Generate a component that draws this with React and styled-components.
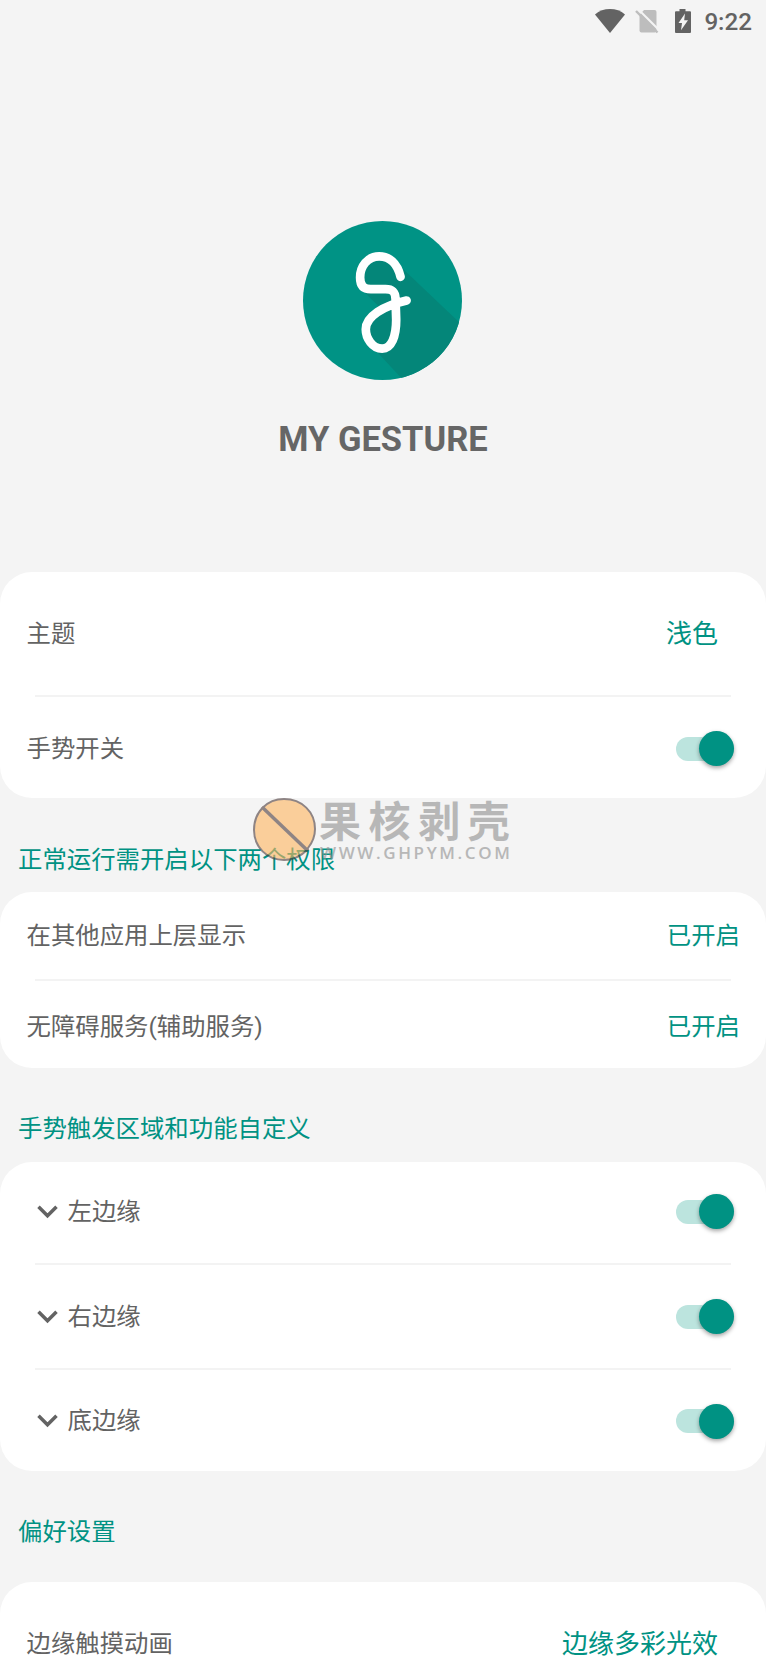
import React, { useState } from 'react'
import styled, { createGlobalStyle } from 'styled-components'

const GlobalStyle = createGlobalStyle`
  *{
    box-sizing:border-box;
  }
  body{
    margin:0;
    background:#f4f4f4;
    font-family: Roboto, 'Noto Sans CJK SC', sans-serif;
    color:#636363;
  }
`;

const Screen = styled.main`
  position:relative;
  height:1659px;
  overflow:hidden;
  display:flex;
  flex-direction:column;
`;

const StatusBar = styled.header`
  height:42px;
  flex:none;
  display:flex;
  align-items:center;
  justify-content:flex-end;
  padding-right:14px;
`;

const StatusIcon = styled.svg`
  display:block;
  flex:none;
  margin-right:${props => props.$gap}px;
`;

const Clock = styled.span`
  font-size:24.2px;
  font-weight:500;
  line-height:42px;
  padding-top:2px;
`;

const Hero = styled.section`
  height:530px;
  flex:none;
  display:flex;
  flex-direction:column;
  align-items:center;
  padding-top:179px;
`;

const Logo = styled.svg`
  display:block;
  margin-right:1px;
`;

const Title = styled.h1`
  margin:39px 0 0;
  font-size:34.5px;
  line-height:40px;
  font-weight:700;
  color:#666;
`;

const Card = styled.section`
  flex:none;
  background:#fff;
  border-radius:32px;
`;

const Row = styled.div`
  height:${props => props.$height}px;
  padding:${props => props.$top || 0}px ${props => props.$right}px ${props => props.$bottom || 0}px 26.5px;
  display:flex;
  align-items:center;
  justify-content:space-between;
`;

const Divider = styled.hr`
  height:2px;
  margin:0 35px;
  border:0;
  background:#f3f3f3;
`;

const Label = styled.span`
  display:flex;
  align-items:center;
  font-size:24.4px;
  line-height:36px;
`;

const Value = styled.span`
  color:#009283;
  font-size:${props => props.$large ? 26 : 24.4}px;
  line-height:36px;
`;

const SectionTitle = styled.h2`
  flex:none;
  height:${props => props.$height}px;
  margin:0;
  padding:${props => props.$top}px 18px 0;
  font-size:24.4px;
  line-height:36px;
  font-weight:400;
  color:#009283;
`;

const Chevron = styled.svg`
  margin:0 10px 0 10px;
`;

const Track = styled.button`
  width:58px;
  height:24px;
  padding:0;
  border:0;
  border-radius:12px;
  background:${props => props.$on ? '#bce4de' : '#d0d0d0'};
  display:flex;
  align-items:center;
  justify-content:${props => props.$on ? 'flex-end' : 'flex-start'};
`;

const Knob = styled.span`
  flex:none;
  width:35px;
  height:35px;
  border-radius:50%;
  background:${props => props.$on ? '#009283' : '#f1f1f1'};
  box-shadow:0 2px 4px rgba(0,0,0,.36);
`;

const Watermark = styled.div`
  position:absolute;
  left:252px;
  top:797px;
  display:flex;
  opacity:.6;
  pointer-events:none;
`;

const WatermarkText = styled.div`
  margin-left:2px;
  color:#8f8f8f;
  white-space:nowrap;
`;

const WatermarkName = styled.div`
  font-family:'Noto Sans CJK SC', sans-serif;
  font-size:42px;
  line-height:44px;
  font-weight:700;
  letter-spacing:7.600px;
`;

const WatermarkUrl = styled.div`
  margin:2px 0 0 1px;
  font-family:'Open Sans', sans-serif;
  font-size:17px;
  line-height:20px;
  font-weight:600;
  letter-spacing:2.600px;
`;

const Switch = () => {
  const [on, setOn] = useState(true)
  return(
    <Track type="button" role="switch" aria-checked={on} $on={on} onClick={() => setOn(!on)}>
      <Knob $on={on} />
    </Track>
  )
}

const Edge = ({ name, height, top, bottom }) => (
  <Row $height={height} $top={top} $bottom={bottom} $right={32}>
    <Label>
      <Chevron width="21" height="14" viewBox="0 0 21 14"><path d="M1.500 1.800L10.500 10.800l9-9" fill="none" stroke="#636363" strokeWidth="3.500"/></Chevron>
      {name}
    </Label>
    <Switch />
  </Row>
)

const Status = () => (
  <StatusBar>
    <StatusIcon $gap={9} width="32" height="26" viewBox="0 0 32 26"><path d="M1 6.500C9-.8 23-.8 31 6.500L16 25z" fill="#636363"/></StatusIcon>
    <StatusIcon $gap={15} width="24" height="26" viewBox="0 0 24 26">
      <path d="M9 2h10.500q2 0 2 2v18.500q0 2-2 2h-13q-2 0-2-2V7z" fill="#bdbdbd"/>
      <path d="M3.500 1.500L25 23" stroke="#f4f4f4" strokeWidth="2"/>
      <path d="M1 3l21.500 21.500" stroke="#bdbdbd" strokeWidth="2.400"/>
    </StatusIcon>
    <StatusIcon $gap={12} width="18" height="26" viewBox="0 0 18 26">
      <path d="M5.500 1h6v2.200H16q1 0 1 1V24q0 1-1 1H2q-1 0-1-1V4.200q0-1 1-1h3.500z" fill="#636363"/>
      <path d="M11 5.500L4.500 15h3.500l-1 7.200L14 12.300h-3.800z" fill="#f4f4f4"/>
    </StatusIcon>
    <Clock>9:22</Clock>
  </StatusBar>
)

export default function App() {
  return(
    <>
      <GlobalStyle />
      <Screen>
        <Status />
        <Hero>
          <Logo width="159" height="159" viewBox="40 34 476 476">
            <clipPath id="disc"><circle cx="278" cy="272" r="238"/></clipPath>
            <circle cx="278" cy="272" r="238" fill="#009385"/>
            {/* long shadow, then the stroke that casts it */}
            <path clipPath="url(#disc)" d="M338 176L520 349V520H349L262 426L228 358L265 288L218 241L212 203C212 170 233 140 268 140C297 140 318 158 332 201z" fill="#048679"/>
            <path d="M332 201C322 158 297 140 268 140C233 140 211 170 211 203C211 229 223 238 243 238H287C310 238 316 247 317 267L319 330C319 380 305 416 277 416C248 416 228 385 228 358C228 320 280 288 350 272" fill="none" stroke="#fff" strokeWidth="26" strokeLinecap="round" strokeLinejoin="round"/>
          </Logo>
          <Title>MY GESTURE</Title>
        </Hero>

        <Card>
          <Row $height={123} $right={48}>
            <Label>主题</Label>
            <Value $large>浅色</Value>
          </Row>
          <Divider />
          <Row $height={101} $top={2} $right={32}>
            <Label>手势开关</Label>
            <Switch />
          </Row>
        </Card>

        <SectionTitle $height={94} $top={44}>正常运行需开启以下两个权限</SectionTitle>
        <Card>
          <Row $height={87} $top={1} $right={26}>
            <Label>在其他应用上层显示</Label>
            <Value>已开启</Value>
          </Row>
          <Divider />
          <Row $height={87} $top={4} $right={26}>
            <Label>无障碍服务(辅助服务)</Label>
            <Value>已开启</Value>
          </Row>
        </Card>

        <SectionTitle $height={94} $top={43}>手势触发区域和功能自定义</SectionTitle>
        <Card>
          <Edge name="左边缘" height={101} bottom={2} />
          <Divider />
          <Edge name="右边缘" height={103} />
          <Divider />
          <Edge name="底边缘" height={101} top={1} />
        </Card>

        <SectionTitle $height={111} $top={43}>偏好设置</SectionTitle>
        <Card>
          <Row $height={123} $right={48}>
            <Label>边缘触摸动画</Label>
            <Value $large>边缘多彩光效</Value>
          </Row>
        </Card>

        <Watermark>
          <svg width="65" height="65" viewBox="0 0 65 65">
            <path d="M55 53C48 60 40 63 32 63C15 63 2 50 2 33C2 15 15 2 32 2C50 2 63 15 63 32C63 40 60 46 56 51z" fill="#ffb55f" stroke="#4c3b3b" strokeWidth="2"/>
            <path d="M10 10L56 54" stroke="#4c3b3b" strokeWidth="3.500"/>
          </svg>
          <WatermarkText>
            <WatermarkName>果核剥壳</WatermarkName>
            <WatermarkUrl>WWW.GHPYM.COM</WatermarkUrl>
          </WatermarkText>
        </Watermark>
      </Screen>
    </>
  )
}
